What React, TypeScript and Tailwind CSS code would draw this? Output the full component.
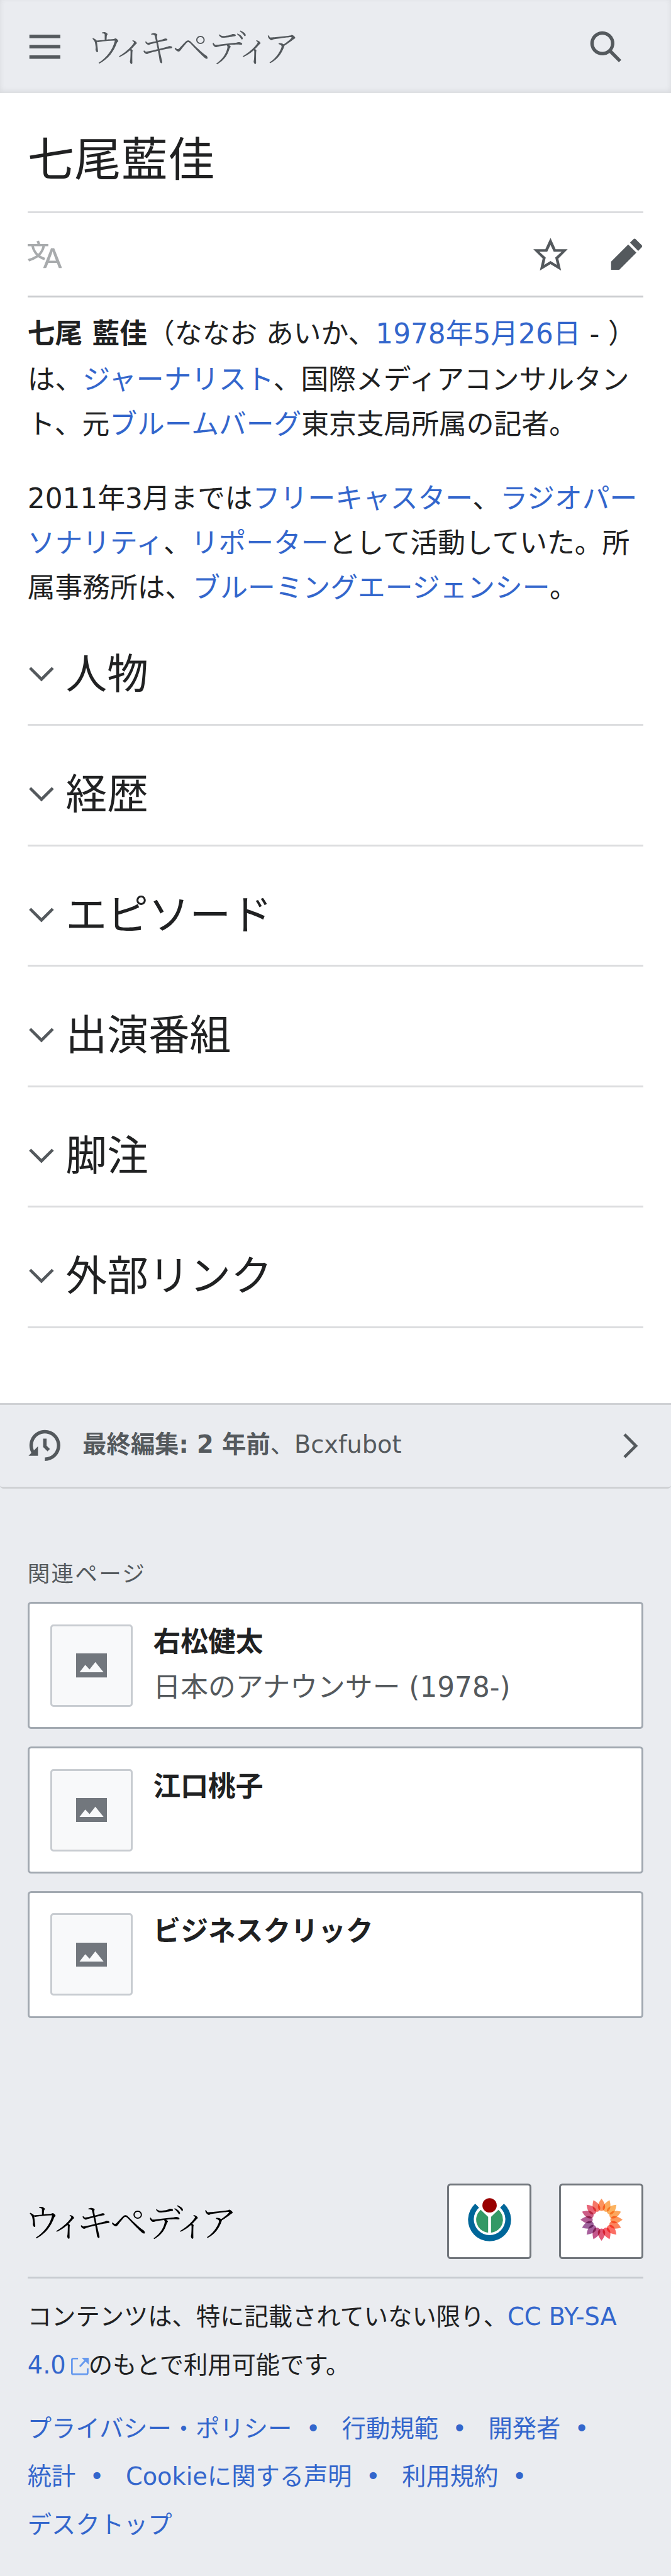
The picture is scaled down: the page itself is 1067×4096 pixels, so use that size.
import type { ReactNode } from "react";

const sections = ["人物", "経歴", "エピソード", "出演番組", "脚注", "外部リンク"];

const related = [
  { title: "右松健太", desc: "日本のアナウンサー (1978-)" },
  { title: "江口桃子", desc: "" },
  { title: "ビジネスクリック", desc: "" },
];

const petals = [
  "#fb8a50", "#fba450", "#fcab50", "#fca04f", "#fc8f4e", "#fb7a50", "#fb6256", "#f4525f",
  "#dd4a6c", "#bf4a82", "#9f5294", "#965493", "#ab4f8b", "#c84f7c", "#e5586c", "#f46c5c",
];

function Icon({ d, className }: { d: string; className: string }) {
  return (
    <svg viewBox="0 0 20 20" className={className} fill="currentColor" aria-hidden="true">
      <path fillRule="evenodd" d={d} />
    </svg>
  );
}

const MENU = "M1 3v2h18V3zm0 8h18V9H1zm0 6h18v-2H1z";
const SEARCH =
  "M12.2 13.6a7 7 0 1 1 1.4-1.4l5.4 5.4-1.4 1.4zM3 8a5 5 0 1 0 10 0A5 5 0 0 0 3 8";
const LANGUAGE =
  "M20 18h-1.44a.6.6 0 0 1-.4-.12.8.8 0 0 1-.23-.31L17 15h-5l-1 2.54a.8.8 0 0 1-.22.3.6.6 0 0 1-.4.14H9l4.55-11.47h1.89zm-3.53-4.31L14.89 9.5a12 12 0 0 1-.39-1.24q-.09.37-.19.69l-.19.56-1.58 4.19zm-6.3-1.58a13.4 13.4 0 0 1-2.91-1.41 11.46 11.46 0 0 0 2.81-5.37H12V4H7.31a4 4 0 0 0-.2-.56C6.87 2.79 6.6 2 6.6 2l-1.47.5s.4.89.6 1.5H0v1.33h2.15A11.23 11.23 0 0 0 5 10.7a17.2 17.2 0 0 1-5 2.1q.56.82.87 1.38a23.3 23.3 0 0 0 5.22-2.51 15.6 15.6 0 0 0 3.56 1.77zM3.63 5.33h4.91a8.1 8.1 0 0 1-2.45 4.45 9.1 9.1 0 0 1-2.46-4.45";
const STAR =
  "M20 7h-7L10 .5 7 7H0l5.46 5.47-1.64 7 6.18-3.7 6.18 3.73-1.63-7zm-10 6.9-3.76 2.27 1-4.28L3.5 8.5h4.61L10 4.6l1.9 3.9h4.6l-3.73 3.4 1 4.28z";
const EDIT =
  "m16.77 8 1.94-2a1 1 0 0 0 0-1.41l-3.34-3.3a1 1 0 0 0-1.41 0L12 3.23zM1 14.25V19h4.75l9.96-9.96-4.75-4.75z";
const EXPAND = "m17.5 4.75-7.5 7.5-7.5-7.5L1 6.25l9 9 9-9z";
const NEXT = "M4.75 2.5 12.25 10l-7.5 7.5 1.5 1.5 9-9-9-9z";
const HISTORY =
  "M9 6v5h.06l2.48 2.47 1.41-1.41L11 10.11V6zM10 1a9 9 0 0 0-7.85 13.35L.5 16H6v-5.5l-2.38 2.38A7 7 0 1 1 10 17v2a9 9 0 0 0 0-18";

function Wordmark({ className }: { className: string }) {
  return (
    <div
      className={`h-[62px] text-[60px] leading-[62px] font-light tracking-[-2.1px] whitespace-nowrap [font-family:'Noto_Serif_CJK_JP','Noto_Sans_CJK_JP',serif] [font-feature-settings:'palt'] ${className}`}
    >
      ウィキペディア
    </div>
  );
}

function Link({ children }: { children: ReactNode }) {
  return <a className="text-[#3366cc]">{children}</a>;
}

function Line({ children, className = "" }: { children: ReactNode; className?: string }) {
  return <span className={`block whitespace-nowrap ${className}`}>{children}</span>;
}

function PictureIcon() {
  return (
    <svg viewBox="0 0 54 42" className="h-[38.3px] w-[49.2px]" aria-hidden="true">
      <path
        fill="#72777d"
        fillRule="evenodd"
        d="M0 0H54V42H0ZM6 33H48L33.6 15 23.5 28 16 20Z"
      />
    </svg>
  );
}

function FoundationLogo() {
  return (
    <svg viewBox="-40 -40 80 80" className="h-[73px] w-[73px]" aria-hidden="true">
      <path
        fill="#006699"
        d="M-25 -27.9A37.5 37.5 0 1 0 25 -27.9L18.4 -21.2A27.5 27.5 0 1 1 -18.4 -21.2Z"
      />
      <path fill="#339966" d="M-15.4 -17.2L-2.5 -4.8V22.4A22.5 22.5 0 0 1 -15.4 -17.2Z" />
      <path fill="#339966" d="M15.4 -17.2L2.5 -4.8V22.4A22.5 22.5 0 0 0 15.4 -17.2Z" />
      <circle cy="-25" r="12.5" fill="#990000" />
    </svg>
  );
}

function SunflowerLogo() {
  return (
    <svg viewBox="-120 -120 240 240" className="isolate h-[73px] w-[73px]" aria-hidden="true">
      {petals.map((fill, i) => (
        <path
          key={i}
          className="mix-blend-multiply"
          fill={fill}
          fillOpacity="0.92"
          transform={`rotate(${i * 22.5})`}
          d="M0 -110C11 -96 19 -82 19 -68C19 -55 10 -46 0 -46C-10 -46 -19 -55 -19 -68C-19 -82 -11 -96 0 -110Z"
        />
      ))}
    </svg>
  );
}

function ExternalIcon() {
  return (
    <svg viewBox="0 0 31 31" className="ml-[8px] inline-block h-[28px] w-[28px] align-[-3px]" aria-hidden="true">
      <path d="M12.3 1.4H4Q1.5 1.4 1.5 4V27Q1.5 29 4 29H26.5Q29.3 29 29.3 26.5V18.5M15.5 15.5L25 5" fill="none" stroke="#6699ee" strokeWidth="3" />
      <path d="M18.5 0H31V12Z" fill="#6699ee" />
    </svg>
  );
}

function FooterItem({ children, last = false }: { children: ReactNode; last?: boolean }) {
  return (
    <li className="flex whitespace-nowrap">
      {children}
      {!last && <span className="mr-[34.5px] ml-[22.4px]">•</span>}
    </li>
  );
}

export default function App() {
  return (
    <div className="flex h-[4096px] w-[1067px] flex-col overflow-hidden bg-[#eaecf0] text-[#202122] [font-family:'DejaVu_Sans','Noto_Sans_CJK_JP',sans-serif]">
      <header className="flex h-[147.7px] shrink-0 items-center justify-between bg-[#eaecf0] px-[43.8px] text-[#54595d] shadow-[inset_0_-2.7px_8px_rgba(0,0,0,0.08)]">
        <div className="flex items-center">
          <Icon d={MENU} className="h-[54.7px] w-[54.7px]" />
          <Wordmark className="-mt-[3px] ml-[41.5px] text-[#54595d]" />
        </div>
        <Icon d={SEARCH} className="mr-[32.8px] h-[54.7px] w-[54.7px]" />
      </header>

      <main className="h-[2083px] shrink-0 bg-white px-[43.8px]">
        <h1 className="h-[191.5px] border-b-[3px] border-[#dcdddf] pt-[57px] text-[74.4px] leading-[100px]">
          七尾藍佳
        </h1>
        <div className="flex h-[134.1px] items-center justify-between border-b-[3px] border-[#cbcdd0] text-[#54595d]">
          <Icon d={LANGUAGE} className="h-[54.7px] w-[54.7px] opacity-50" />
          <div className="flex gap-[65.7px]">
            <Icon d={STAR} className="h-[54.7px] w-[54.7px]" />
            <Icon d={EDIT} className="h-[54.7px] w-[54.7px]" />
          </div>
        </div>

        <div className="flex h-[489.7px] flex-col gap-[47.1px] pt-[21.7px] text-[43.78px] leading-[71px]">
          <p>
            <Line className="mb-[2px]">
              <b>七尾 藍佳</b>（ななお あいか、<Link>1978年5月26日</Link> - ）
            </Line>
            <Line>
              は、<Link>ジャーナリスト</Link>、国際メディアコンサルタン
            </Line>
            <Line>
              ト、元<Link>ブルームバーグ</Link>東京支局所属の記者。
            </Line>
          </p>
          <p>
            <Line>
              2011年3月までは<Link>フリーキャスター</Link>、<Link>ラジオパー</Link>
            </Line>
            <Line>
              <Link>ソナリティ</Link>、<Link>リポーター</Link>として活動していた。所
            </Line>
            <Line>
              属事務所は、<Link>ブルーミングエージェンシー</Link>。
            </Line>
          </p>
        </div>

        {sections.map((name) => (
          <h2
            key={name}
            className="flex h-[191.5px] items-center border-b-[3px] border-[#dcdddf] pt-[28.8px] text-[65.66px] leading-[80px]"
          >
            <Icon d={EXPAND} className="mr-[17px] h-[43.8px] w-[43.8px] text-[#54595d]" />
            {name}
          </h2>
        ))}
      </main>

      <div className="flex h-[135.9px] shrink-0 items-center rounded-b-[5px] border-t-[3px] border-b-[3px] border-[#cfd1d4] px-[43.8px] text-[38.3px] leading-[60px] text-[#54595d]">
        <Icon d={HISTORY} className="h-[54.7px] w-[54.7px]" />
        <div className="-mt-[4px] ml-[32.8px] grow whitespace-nowrap">
          <b>最終編集: 2 年前</b>、Bcxfubot
        </div>
        <Icon d={NEXT} className="-mr-[2px] h-[43.8px] w-[43.8px]" />
      </div>

      <section className="px-[43.8px] pt-[111.1px]">
        <h3 className="mb-[19.4px] text-[35.6px] leading-[50px] tracking-[2.2px] text-[#54595d]">
          関連ページ
        </h3>
        <ul className="flex flex-col gap-[27.6px]">
          {related.map((item) => (
            <li
              key={item.title}
              className="flex h-[202.2px] items-start rounded-[5.5px] border-[3px] border-[#a2a9b1] bg-white p-[32.8px]"
            >
              <div className="flex h-[131px] w-[131px] items-center justify-center rounded-[5px] border-[3px] border-[#c8ccd1] bg-[#f8f9fa]">
                <PictureIcon />
              </div>
              <div className="-mt-[7.5px] ml-[32.8px] text-[43.78px] leading-[72px] whitespace-nowrap">
                <div className="font-bold">{item.title}</div>
                <div className="text-[#54595d]">{item.desc}</div>
              </div>
            </li>
          ))}
        </ul>
      </section>

      <footer className="px-[43.8px] pt-[263px]">
        <div className="flex items-center justify-between border-b-[3px] border-[#c8ccd1] pb-[27.3px]">
          <Wordmark className="-mt-[4px] -ml-[3.5px] text-black" />
          <div className="flex gap-[43.8px]">
            <div className="flex h-[120.4px] w-[134px] items-center justify-center rounded-[5.5px] border-[3px] border-[#72777d] bg-white pb-[5px]">
              <FoundationLogo />
            </div>
            <div className="flex h-[120.4px] w-[134px] items-center justify-center rounded-[5.5px] border-[3px] border-[#72777d] bg-white pb-[5px]">
              <SunflowerLogo />
            </div>
          </div>
        </div>
        <div className="mt-[23.5px] text-[38.3px] leading-[76.6px]">
          <Line>
            コンテンツは、特に記載されていない限り、<Link>CC BY-SA</Link>
          </Line>
          <Line>
            <Link>
              4.0
              <ExternalIcon />
            </Link>
            のもとで利用可能です。
          </Line>
        </div>
        <div className="mt-[24.6px] text-[38.3px] leading-[76.6px] text-[#3366cc]">
          <ul className="flex">
            <FooterItem>プライバシー・ポリシー</FooterItem>
            <FooterItem>行動規範</FooterItem>
            <FooterItem>開発者</FooterItem>
          </ul>
          <ul className="flex">
            <FooterItem>統計</FooterItem>
            <FooterItem>Cookieに関する声明</FooterItem>
            <FooterItem>利用規約</FooterItem>
          </ul>
          <ul className="flex">
            <FooterItem last>デスクトップ</FooterItem>
          </ul>
        </div>
      </footer>
    </div>
  );
}
